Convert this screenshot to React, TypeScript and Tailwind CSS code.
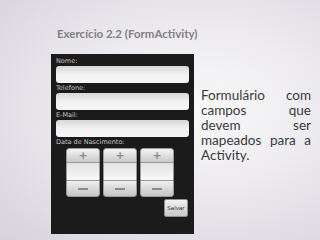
import React from "react";

const fields = ["Nome:", "Telefone:", "E-Mail:"];

const lines = [
    ["Formulário", "com"],
    ["campos", "que"],
    ["devem", "ser"],
    ["mapeados", "para", "a"],
];

const Spinner = () => {
    return (
        <div className="flex flex-col w-[34px] h-[49px]">
            <div className="h-[15px] rounded-t-[3px] bg-gradient-to-b from-[#f4f4f4] to-[#c9c9c9] border border-[#9a9a9a] flex items-center justify-center text-[#8a8a8a] text-[11px] leading-none font-bold">
                +
            </div>
            <div className="h-[17px] bg-gradient-to-b from-[#e2e2e2] to-[#f8f8f8] border-x border-[#9a9a9a]" />
            <div className="h-[17px] rounded-b-[3px] bg-gradient-to-b from-[#f0f0f0] to-[#c4c4c4] border border-[#9a9a9a] flex items-center justify-center">
                <div className="w-[10px] h-[2px] bg-[#8a8a8a]" />
            </div>
        </div>
    );
};

const App = () => {
    return (
        <div className="w-[320px] h-[240px] overflow-hidden bg-[radial-gradient(ellipse_at_62%_45%,#f8f8f9_0%,#eeecf0_40%,#d7d2dc_100%)] font-['Lato','Open_Sans',sans-serif]">
            <div className="h-[54px] pl-[57px] pt-[27px]">
                <h1 className="text-[11.5px] leading-[14px] font-bold text-[#818181]">Exercício 2.2 (FormActivity)</h1>
            </div>
            <div className="flex pl-[51px]">
                <div className="w-[143px] h-[180px] bg-[#1b1b1b] px-[5px] pt-[2px] font-['DejaVu_Sans',sans-serif]">
                    {fields.map((f) => (
                        <div key={f}>
                            <div className="h-[10px] text-[6.5px] leading-[10px] text-[#c4c4c4]">{f}</div>
                            <div className="h-[17px] rounded-[3px] bg-gradient-to-b from-[#d6d6d6] via-[#f2f2f2] to-[#f6f6f6]" />
                        </div>
                    ))}
                    <div className="h-[10px] text-[6.5px] leading-[10px] text-[#c4c4c4]">Data de Nascimento:</div>
                    <div className="flex gap-[3px] pl-[10px] mt-[1px]">
                        <Spinner />
                        <Spinner />
                        <Spinner />
                    </div>
                    <div className="flex justify-end pr-[1px] mt-[2px]">
                        <div className="w-[24px] h-[18px] rounded-[2px] bg-gradient-to-b from-[#f2f2f2] to-[#c8c8c8] border border-[#8f8f8f] flex items-center justify-center text-[5.5px] text-[#333]">
                            Salvar
                        </div>
                    </div>
                </div>
                <div className="w-[110px] ml-[7px] mt-[34px] text-[13.5px] leading-[15px] text-[#3a3a3a]">
                    {lines.map((l, i) => (
                        <div key={i} className="flex justify-between">
                            {l.map((w) => (
                                <span key={w}>{w}</span>
                            ))}
                        </div>
                    ))}
                    <div>Activity.</div>
                </div>
            </div>
        </div>
    );
};

export default App;
